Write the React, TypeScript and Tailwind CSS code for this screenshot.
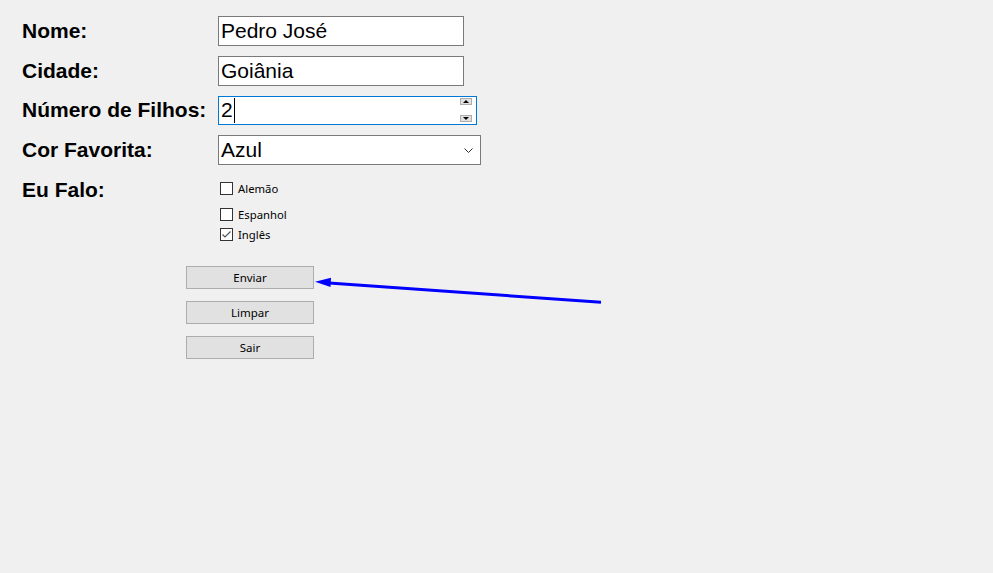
import React from "react";

const labelCls = "w-[196px] text-[21px] font-bold text-black leading-none pb-[2px]";
const sans = { fontFamily: '"Liberation Sans", Arial, sans-serif' };
const ui = { fontFamily: '"Noto Sans", "Open Sans", sans-serif' };

function Check({ label, checked, className }: { label: string; checked?: boolean; className?: string }) {
  return (
    <div className={"flex items-center h-[13px] " + (className ?? "")}>
      <div className="w-[13px] h-[13px] border border-[#333333] bg-white flex items-center justify-center">
        {checked && (
          <svg width="11" height="11" viewBox="0 0 11 11">
            <path d="M1.5 5.5 L4 8 L9.5 2.5" fill="none" stroke="#555" strokeWidth="1.2" />
          </svg>
        )}
      </div>
      <span className="ml-[5px] text-[11.3px] text-black leading-none" style={ui}>
        {label}
      </span>
    </div>
  );
}

function Btn({ label, className }: { label: string; className?: string }) {
  return (
    <div
      className={
        "w-[128px] h-[23px] bg-[#e1e1e1] border border-[#adadad] flex items-center justify-center text-[11.5px] text-black " +
        (className ?? "")
      }
      style={ui}
    >
      {label}
    </div>
  );
}

export default function App() {
  return (
    <div className="relative w-full min-h-screen bg-[#f0f0f0]" style={sans}>
      <div className="flex flex-col pt-[16px] pl-[22px]">
        <div className="flex items-center h-[30px]">
          <div className={labelCls}>Nome:</div>
          <div className="w-[246px] h-[30px] border border-[#7a7a7a] bg-white flex items-center pl-[2px] pb-[1px] text-[21px] text-black">
            Pedro José
          </div>
        </div>
        <div className="flex items-center h-[30px] mt-[10px]">
          <div className={labelCls}>Cidade:</div>
          <div className="w-[246px] h-[30px] border border-[#7a7a7a] bg-white flex items-center pl-[2px] pb-[1px] text-[21px] text-black">
            Goiânia
          </div>
        </div>
        <div className="flex items-center h-[29px] mt-[10px]">
          <div className={labelCls}>Número de Filhos:</div>
          <div className="relative w-[259px] h-[29px] border border-[#0078d7] bg-white flex items-center pl-[2px] pb-[1px] text-[21px] text-black">
            <span>2</span>
            <span className="w-px h-[25px] bg-black ml-[1px]" />
            <div className="absolute right-[4px] top-[1px] w-[12px] h-[7px] bg-[#e1e1e1] border border-[#adadad] flex items-center justify-center">
              <svg width="6" height="3" viewBox="0 0 6 3">
                <path d="M0 3 L3 0 L6 3 Z" fill="#000" />
              </svg>
            </div>
            <div className="absolute right-[4px] bottom-[2px] w-[12px] h-[7px] bg-[#e1e1e1] border border-[#adadad] flex items-center justify-center">
              <svg width="6" height="3" viewBox="0 0 6 3">
                <path d="M0 0 L6 0 L3 3 Z" fill="#000" />
              </svg>
            </div>
          </div>
        </div>
        <div className="flex items-center h-[30px] mt-[10px]">
          <div className={labelCls}>Cor Favorita:</div>
          <div className="relative w-[263px] h-[30px] border border-[#7a7a7a] bg-white flex items-center pl-[2px] pb-[1px] text-[21px] text-black">
            Azul
            <svg className="absolute right-[7px] top-[12px]" width="9" height="6" viewBox="0 0 9 6">
              <path d="M0.5 0.5 L4.5 4.5 L8.5 0.5" fill="none" stroke="#333" strokeWidth="1" />
            </svg>
          </div>
        </div>
        <div className="flex mt-[10px]">
          <div className={labelCls + " h-[30px] flex items-center"}>Eu Falo:</div>
          <div className="flex flex-col pt-[7px] pl-[2px]">
            <Check label="Alemão" />
            <Check label="Espanhol" className="mt-[13px]" />
            <Check label="Inglês" checked className="mt-[7px]" />
          </div>
        </div>
        <div className="flex flex-col pl-[164px] mt-[25px]">
          <Btn label="Enviar" />
          <Btn label="Limpar" className="mt-[12px]" />
          <Btn label="Sair" className="mt-[12px]" />
        </div>
      </div>
      <svg className="absolute left-0 top-0 pointer-events-none" width="993" height="573" viewBox="0 0 993 573">
        <line x1="329" y1="283" x2="601" y2="302.3" stroke="#0000ff" strokeWidth="3" />
        <polygon points="315,281.7 331,277.8 330.5,287" fill="#0000ff" />
      </svg>
    </div>
  );
}
